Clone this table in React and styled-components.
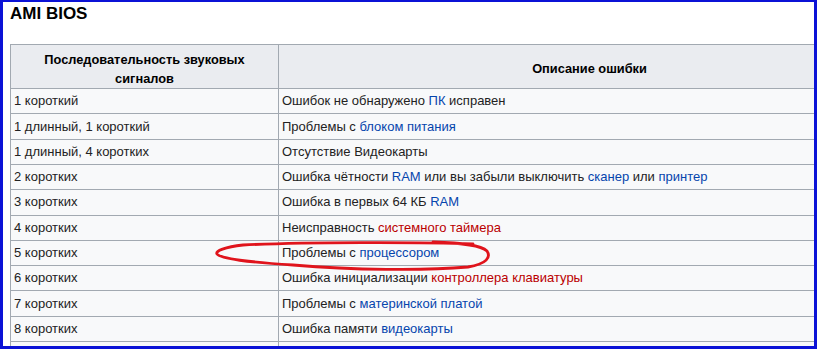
import React from "react";
import styled, { createGlobalStyle } from "styled-components";

const Global = createGlobalStyle`
  html, body { margin: 0; padding: 0; background: #fff; overflow: hidden; }
  body { font-family: Arial, "Liberation Sans", sans-serif; }
`;

const Frame = styled.div`
  position: relative;
  width: 817px;
  height: 349px;
  box-sizing: border-box;
  border-style: solid;
  border-color: #0b12d6;
  border-width: 2px 3px 3px 3px;
  background: #fff;
  overflow: hidden;
  padding-left: 7px;
`;

const Title = styled.h3`
  margin: 1.6px 0 0 0;
  font-size: 17px;
  line-height: 19.5px;
  font-weight: bold;
  color: #000;
`;

const Table = styled.table`
  margin-top: 21px;
  width: 891px;
  border-collapse: collapse;
  background: #f8f9fa;
  color: #222;
  font-size: 13px;
  table-layout: fixed;
`;

const Row = styled.tr`
  height: ${(p) => (p.$head ? "44px" : "25.3px")};
`;

const Head = styled.th`
  background: #eaecf0;
  border: 1px solid #a2a9b1;
  font-weight: bold;
  font-size: 12.8px;
  text-align: center;
  line-height: 19px;
  padding: 4px 6px 0;
  color: #000;
`;

const Cell = styled.td`
  border: 1px solid #a2a9b1;
  padding: 0 3px;
  line-height: 18px;
  white-space: nowrap;
`;

const Link = styled.a`
  color: ${(p) => (p.$red ? "#ba0000" : "#0645ad")};
  text-decoration: none;
`;

const Mark = styled.svg`
  position: absolute;
  left: 0;
  top: 0;
  pointer-events: none;
`;

const rows = [
  ["1 короткий", ["Ошибок не обнаружено ", { t: "ПК" }, " исправен"]],
  ["1 длинный, 1 короткий", ["Проблемы с ", { t: "блоком питания" }]],
  ["1 длинный, 4 коротких", ["Отсутствие Видеокарты"]],
  ["2 коротких", ["Ошибка чётности ", { t: "RAM" }, " или вы забыли выключить ", { t: "сканер" }, " или ", { t: "принтер" }]],
  ["3 коротких", ["Ошибка в первых 64 КБ ", { t: "RAM" }]],
  ["4 коротких", ["Неисправность ", { t: "системного таймера", red: true }]],
  ["5 коротких", ["Проблемы с ", { t: "процессором" }]],
  ["6 коротких", ["Ошибка инициализации ", { t: "контроллера клавиатуры", red: true }]],
  ["7 коротких", ["Проблемы с ", { t: "материнской платой" }]],
  ["8 коротких", ["Ошибка памяти ", { t: "видеокарты" }]],
  ["", []],
];

export default function App() {
  return (
    <>
      <Global />
      <Frame>
        <Title>AMI BIOS</Title>
        <Table>
          <colgroup>
            <col style={{ width: "268px" }} />
            <col />
          </colgroup>
          <thead>
            <Row $head>
              <Head>Последовательность звуковых сигналов</Head>
              <Head>Описание ошибки</Head>
            </Row>
          </thead>
          <tbody>
            {rows.map(([seq, parts], i) => (
              <Row key={i}>
                <Cell>{seq}</Cell>
                <Cell>
                  {parts.map((p, j) =>
                    typeof p === "string" ? (
                      <React.Fragment key={j}>{p}</React.Fragment>
                    ) : (
                      <Link key={j} href="#" $red={p.red}>
                        {p.t}
                      </Link>
                    )
                  )}
                </Cell>
              </Row>
            ))}
          </tbody>
        </Table>
        <Mark width="817" height="349" viewBox="0 0 817 349">
          <path
            d="M470 242 C420 240 300 240 240 243 C222 245 212 249 214 252 C218 257 245 260 290 263 C350 268 420 269 465 265 C484 262 488 255 484 249 C478 243 460 241 430 240"
            fill="none"
            stroke="#e0141c"
            strokeWidth="2.8"
            strokeLinecap="round"
          />
        </Mark>
      </Frame>
    </>
  );
}
